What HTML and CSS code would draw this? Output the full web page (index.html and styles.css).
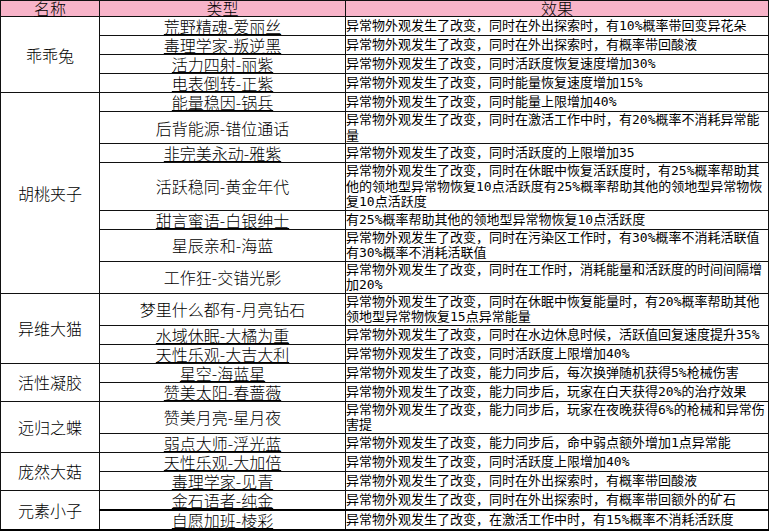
FILE: index.html
```html
<!DOCTYPE html>
<html lang="zh-CN">
<head>
<meta charset="utf-8">
<title>异常物外观</title>
<link rel="stylesheet" href="styles.css">
</head>
<body>
<table class="sheet">
  <colgroup>
    <col class="c-name">
    <col class="c-type">
    <col class="c-effect">
  </colgroup>
  <thead>
    <tr class="hd">
      <th><span class="u">名称</span></th>
      <th><span class="u">类型</span></th>
      <th><span class="u">效果</span></th>
    </tr>
  </thead>
  <tbody>
    <tr>
      <td class="name" rowspan="4">乖乖兔</td>
      <td class="type"><span class="u">荒野精魂-爱丽丝</span></td>
      <td class="effect">异常物外观发生了改变，同时在外出探索时，有10%概率带回变异花朵</td>
    </tr>
    <tr>
      <td class="type"><span class="u">毒理学家-叛逆黑</span></td>
      <td class="effect">异常物外观发生了改变，同时在外出探索时，有概率带回酸液</td>
    </tr>
    <tr>
      <td class="type"><span class="u">活力四射-丽紫</span></td>
      <td class="effect">异常物外观发生了改变，同时活跃度恢复速度增加30%</td>
    </tr>
    <tr>
      <td class="type"><span class="u">电表倒转-正紫</span></td>
      <td class="effect">异常物外观发生了改变，同时能量恢复速度增加15%</td>
    </tr>
    <tr>
      <td class="name" rowspan="7">胡桃夹子</td>
      <td class="type"><span class="u">能量稳因-锅兵</span></td>
      <td class="effect">异常物外观发生了改变，同时能量上限增加40%</td>
    </tr>
    <tr>
      <td class="type">后背能源-错位通话</td>
      <td class="effect">异常物外观发生了改变，同时在激活工作中时，有20%概率不消耗异常能量</td>
    </tr>
    <tr>
      <td class="type"><span class="u">非完美永动-雅紫</span></td>
      <td class="effect">异常物外观发生了改变，同时活跃度的上限增加35</td>
    </tr>
    <tr>
      <td class="type">活跃稳同-黄金年代</td>
      <td class="effect">异常物外观发生了改变，同时在休眠中恢复活跃度时，有25%概率帮助其他的领地型异常物恢复10点活跃度有25%概率帮助其他的领地型异常物恢复10点活跃度</td>
    </tr>
    <tr>
      <td class="type"><span class="u">甜言蜜语-白银绅士</span></td>
      <td class="effect">有25%概率帮助其他的领地型异常物恢复10点活跃度</td>
    </tr>
    <tr>
      <td class="type">星辰亲和-海蓝</td>
      <td class="effect">异常物外观发生了改变，同时在污染区工作时，有30%概率不消耗活联值有30%概率不消耗活联值</td>
    </tr>
    <tr>
      <td class="type">工作狂-交错光影</td>
      <td class="effect">异常物外观发生了改变，同时在工作时，消耗能量和活跃度的时间间隔增加20%</td>
    </tr>
    <tr>
      <td class="name" rowspan="3">异维大猫</td>
      <td class="type">梦里什么都有-月亮钻石</td>
      <td class="effect">异常物外观发生了改变，同时在休眠中恢复能量时，有20%概率帮助其他领地型异常物恢复15点异常能量</td>
    </tr>
    <tr>
      <td class="type"><span class="u">水域休眠-大橘为重</span></td>
      <td class="effect">异常物外观发生了改变，同时在水边休息时候，活跃值回复速度提升35%</td>
    </tr>
    <tr>
      <td class="type"><span class="u">天性乐观-大吉大利</span></td>
      <td class="effect">异常物外观发生了改变，同时活跃度上限增加40%</td>
    </tr>
    <tr>
      <td class="name" rowspan="2">活性凝胶</td>
      <td class="type"><span class="u">星空-海蓝星</span></td>
      <td class="effect">异常物外观发生了改变，能力同步后，每次换弹随机获得5%枪械伤害</td>
    </tr>
    <tr>
      <td class="type"><span class="u">赞美太阳-春蔷薇</span></td>
      <td class="effect">异常物外观发生了改变，能力同步后，玩家在白天获得20%的治疗效果</td>
    </tr>
    <tr>
      <td class="name" rowspan="2">远归之蝶</td>
      <td class="type">赞美月亮-星月夜</td>
      <td class="effect">异常物外观发生了改变，能力同步后，玩家在夜晚获得6%的枪械和异常伤害提</td>
    </tr>
    <tr>
      <td class="type"><span class="u">弱点大师-浮光蓝</span></td>
      <td class="effect">异常物外观发生了改变，能力同步后，命中弱点额外增加1点异常能</td>
    </tr>
    <tr>
      <td class="name" rowspan="2">庞然大菇</td>
      <td class="type"><span class="u">天性乐观-大加倍</span></td>
      <td class="effect">异常物外观发生了改变，同时活跃度上限增加40%</td>
    </tr>
    <tr>
      <td class="type"><span class="u">毒理学家-见青</span></td>
      <td class="effect">异常物外观发生了改变，同时在外出探索时，有概率带回酸液</td>
    </tr>
    <tr class="last">
      <td class="name" rowspan="2">元素小子</td>
      <td class="type"><span class="u">金石语者-纯金</span></td>
      <td class="effect">异常物外观发生了改变，同时在外出探索时，有概率带回额外的矿石</td>
    </tr>
    <tr class="last">
      <td class="type"><span class="u">自愿加班-棱彩</span></td>
      <td class="effect">异常物外观发生了改变，在激活工作中时，有15%概率不消耗活跃度</td>
    </tr>
  </tbody>
</table>
</body>
</html>
```

FILE: styles.css
```css
html, body {
  margin: 0;
  padding: 0;
  background: #ffffff;
}

.sheet {
  border-collapse: collapse;
  table-layout: fixed;
  width: 768px;
  font-family: "Noto Sans CJK SC", "Noto Sans", sans-serif;
  color: #000000;
}

.c-name { width: 99px; }
.c-type { width: 246px; }
.c-effect { width: 423px; }

.sheet th,
.sheet td {
  border: 1px solid #111111;
  padding: 0;
}

.hd th {
  background: #f8b4c9;
  font-weight: 300;
  font-size: 16px;
  line-height: 15px;
  text-align: center;
  vertical-align: middle;
}

.u {
  text-decoration: underline;
  text-decoration-thickness: 1px;
  text-underline-offset: 1px;
}

.name {
  font-size: 16px;
  font-weight: 300;
  line-height: 18px;
  text-align: center;
  vertical-align: middle;
}

.type {
  font-size: 16px;
  font-weight: 300;
  line-height: 18px;
  text-align: center;
  vertical-align: middle;
}

.effect {
  font-family: "DejaVu Sans Mono", "Noto Sans CJK SC", monospace;
  font-size: 13px;
  line-height: 15.5px;
  padding-left: 2px;
  text-align: left;
  vertical-align: middle;
}

.sheet tr.last td {
  border-bottom: 2px solid #000000;
}
```
